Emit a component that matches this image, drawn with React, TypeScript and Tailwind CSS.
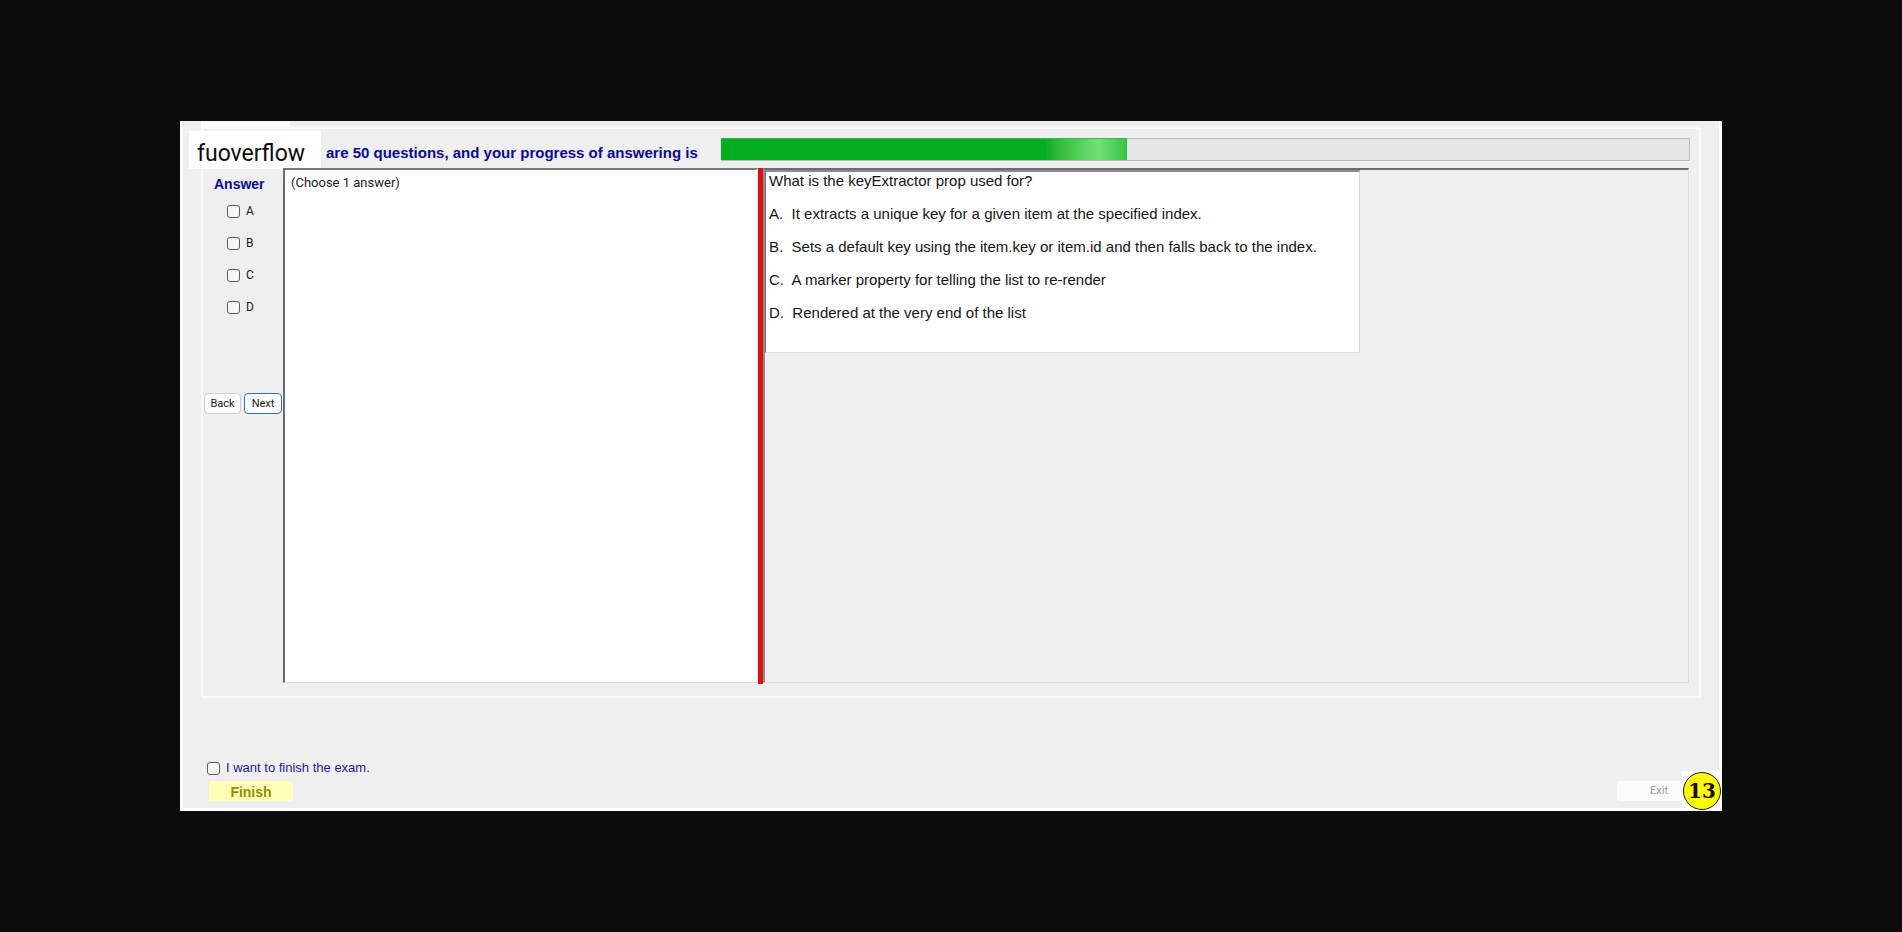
import { useState } from "react";

const choices = ["A", "B", "C", "D"];

const options = [
  { key: "A", text: "It extracts a unique key for a given item at the specified index." },
  { key: "B", text: "Sets a default key using the item.key or item.id and then falls back to the index." },
  { key: "C", text: "A marker property for telling the list to re-render" },
  { key: "D", text: "Rendered at the very end of the list" },
];

const boxClass =
  "size-[13px] shrink-0 appearance-none rounded-[3px] border border-[#5c5c5c] bg-[#f6f6f6] checked:bg-[#0067c0]";

function ExamHeader({ percent }: { percent: number }) {
  return (
    <header className="flex h-[38px] items-start">
      <div className="-ml-[14px] h-[38px] w-[132px] shrink-0 bg-white pt-[9px] pl-2 font-[Roboto,sans-serif] text-[23px] leading-7 text-[#0c0c0c]">
        fuoverflow
      </div>
      <p className="ml-[5px] w-[395px] shrink-0 pt-[13px] font-['Liberation_Sans',sans-serif] text-[15px] leading-[18px] font-bold whitespace-nowrap text-[#0a0a9c]">
        are 50 questions, and your progress of answering is
      </p>
      <div
        role="progressbar"
        aria-valuenow={percent}
        aria-label="Progress of answering"
        className="mt-[7px] mr-[9px] h-[23px] flex-1 border border-[#bcbcbc] bg-[#e5e5e5]"
      >
        <div
          className="-mt-px -ml-px h-[22px] border-t border-[#35b650] bg-linear-to-r from-[#04ae20] from-80% via-[#70e276] via-93% to-[#2fc245]"
          style={{ width: `${percent}%` }}
        />
      </div>
    </header>
  );
}

function AnswerColumn() {
  return (
    <div role="group" aria-label="Answer choices" className="flex w-20 shrink-0 flex-col pt-[7px]">
      <div className="pl-[11px] font-['Liberation_Sans',sans-serif] text-[14px] leading-[18px] font-bold text-[#0a0a9c]">
        Answer
      </div>
      <div className="mt-[2px] flex flex-col pl-6">
        {choices.map((c) => (
          <label key={c} className="flex h-8 items-center gap-[6px] text-[12px] leading-4">
            <input type="checkbox" className={boxClass} />
            {c}
          </label>
        ))}
      </div>
      <div className="mt-[70px] flex gap-[3px] pl-px text-[11px]">
        <button className="h-[21px] w-[37px] rounded-[4px] border border-[#cfcfcf] bg-[#fcfcfc] leading-none">
          Back
        </button>
        <button className="h-[21px] w-[38px] rounded-[4px] border border-[#2d7d9a] bg-[#fcfcfc] leading-none">
          Next
        </button>
      </div>
    </div>
  );
}

function QuestionPane() {
  return (
    <section className="flex min-w-0 flex-1 flex-col items-start border-t-2 border-r border-b border-l-2 border-t-[#6c6c70] border-r-[#dcdcdc] border-b-[#dcdcdc] border-l-[#8a8a90]">
      <div className="w-[595px] border-t-2 border-r border-b border-l border-t-[#8a8a90] border-r-[#dcdcdc] border-b-[#dcdcdc] border-l-[#77777c] bg-white pb-[31px] pl-[3px] font-['Liberation_Sans',sans-serif] text-[15px] leading-[17px] text-[#151515]">
        <p>What is the keyExtractor prop used for?</p>
        <ul>
          {options.map((o) => (
            <li key={o.key} className="mt-4 whitespace-pre">
              {o.key}.{"  "}
              {o.text}
            </li>
          ))}
        </ul>
      </div>
    </section>
  );
}

export default function App() {
  const [wantsFinish, setWantsFinish] = useState(false);
  return (
    <div className="flex min-h-screen flex-col bg-[#0d0d0d] px-[180px] py-[121px] font-[Roboto,sans-serif] text-[#1a1a1a]">
      <main className="relative flex flex-1 flex-col border-x-[3px] border-b-[3px] border-white bg-[#efefef] px-[18px]">
        <div className="h-[6px] w-[89px] bg-[#fbfbfb]" />
        <div className="flex flex-1 flex-col border-2 border-[#fafafa] pt-[2px] pb-[13px]">
          <ExamHeader percent={42} />
          <div className="-mt-px flex flex-1 pr-[10px]">
            <AnswerColumn />
            <section className="w-[475px] shrink-0 border-t-2 border-r-2 border-b border-l-2 border-t-[#77777c] border-r-[#f3f3f3] border-b-[#dcdcdc] border-l-[#6c6c70] bg-white pt-[3px] pl-[6px] text-[13px] leading-5">
              (Choose 1 answer)
            </section>
            <div className="-mb-px w-[5px] shrink-0 bg-[#dd100a]" />
            <QuestionPane />
          </div>
        </div>
        <footer className="flex items-end justify-between pt-[60px] pb-[7px] pl-[6px]">
          <div>
            <label className="flex items-center gap-[6px] font-['Liberation_Sans',sans-serif] text-[13px] leading-5 text-[#1a1a9c]">
              <input
                type="checkbox"
                checked={wantsFinish}
                onChange={(e) => setWantsFinish(e.target.checked)}
                className={boxClass}
              />
              I want to finish the exam.
            </label>
            <button className="mt-[3px] ml-[2px] block h-5 w-[84px] rounded-[2px] bg-[#ffffb8] pt-px font-['Liberation_Sans',sans-serif] text-[14px] leading-5 font-bold text-[#8f8f0c]">
              Finish
            </button>
          </div>
          <button disabled className="h-5 w-[84px] rounded-[2px] bg-[#fafafa] text-[11px] leading-5 text-[#9a9a9a]">
            Exit
          </button>
        </footer>
        <div className="absolute -right-[3px] -bottom-[3px] flex size-10 items-center justify-center bg-white">
          <div className="flex size-[38px] items-center justify-center rounded-full border border-[#1a1a1a] bg-[#fcfc08] font-['DejaVu_Serif',serif] text-[20px] leading-none font-bold text-[#1c0c0c]">
            13
          </div>
        </div>
      </main>
    </div>
  );
}
